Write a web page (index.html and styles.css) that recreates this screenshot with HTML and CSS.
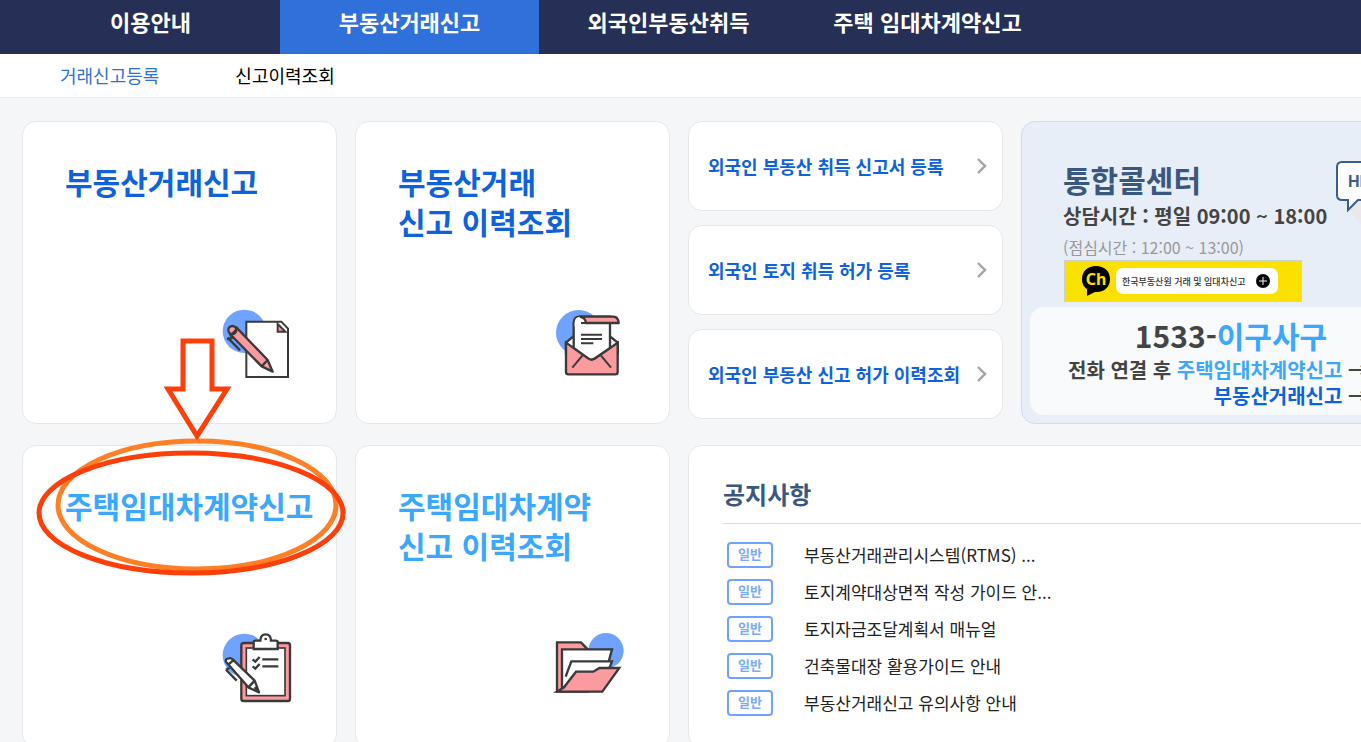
FILE: index.html
```
<!DOCTYPE html>
<html lang="ko">
<head>
    <meta charset="UTF-8">
    <meta name="viewport" content="width=device-width, initial-scale=1.0">
    <title>부동산거래관리시스템</title>
    <link rel="stylesheet" href="styles.css">
</head>
<body>
    <div class="page">
        <nav class="main-nav">
            <a href="#">이용안내</a>
            <a href="#" class="active">부동산거래신고</a>
            <a href="#">외국인부동산취득</a>
            <a href="#">주택 임대차계약신고</a>
        </nav>
        <nav class="sub-nav">
            <a href="#" class="active">거래신고등록</a>
            <a href="#">신고이력조회</a>
        </nav>

        <main class="grid">
            <a href="#" class="card menu-card">
                <h2>부동산거래신고</h2>
                <svg class="icon" viewBox="30 24 216 216">
                    <circle cx="103" cy="94" r="65" fill="#6fa3ff"/>
                    <path d="M109 65H214L234 86V231H109Z" fill="#fff" stroke="#3a3a3a" stroke-width="6"/>
                    <path d="M203 72V95H226Z" fill="#fb9a9f" stroke="#3a3a3a" stroke-width="6"/>
                    <path d="M77 81L173 180L188 215L155 199L58 101Z" fill="#fb9a9f"/>
                    <circle cx="67" cy="90" r="12" fill="#fb9a9f" stroke="#3a3a3a" stroke-width="7"/>
                    <path d="M79 82L173 180L188 215L155 199L60 102M62 107L78 90M155 199L173 180M55 115L88 149M54 117L70 113" fill="none" stroke="#3a3a3a" stroke-width="7" stroke-linecap="round" stroke-linejoin="round"/>
                </svg>
            </a>

            <a href="#" class="card menu-card">
                <h2>부동산거래<br>신고 이력조회</h2>
                <svg class="icon" viewBox="39 24 216 216">
                    <circle cx="116" cy="98" r="68" fill="#6fa3ff"/>
                    <path d="M78 128L100 109H210L233 128V160H78Z" fill="#fff" stroke="#3a3a3a" stroke-width="7"/>
                    <path d="M78 128L145 175Q155 182 165 175L233 128V216Q233 223 226 223H85Q78 223 78 216Z" fill="#fb9a9f" stroke="#3a3a3a" stroke-width="7"/>
                    <path d="M101 144V68Q102 50 119 50H210V144L165 175Q155 182 145 175Z" fill="#fff" stroke="#3a3a3a" stroke-width="7"/>
                    <path d="M119 50H220Q235 51 236 69H137Q137 53 119 50Z" fill="#fb9a9f" stroke="#3a3a3a" stroke-width="7" stroke-linejoin="round"/>
                    <path d="M119 50Q137 53 137 69Q120 66 104 80V68Q104 52 119 50Z" fill="#fff"/>
                    <path d="M119 50Q137 53 137 69H123" fill="none" stroke="#3a3a3a" stroke-width="6"/>
                    <path d="M123 104H186M123 117H186M123 130H160M127 167L97 203M183 167L213 203" stroke="#3a3a3a" stroke-width="6"/>
                </svg>
            </a>

            <div class="link-list">
                <a href="#" class="card link-card">외국인 부동산 취득 신고서 등록
                    <svg class="chevron" viewBox="0 0 10 16"><path d="M1 1L8 8L1 15"/></svg>
                </a>
                <a href="#" class="card link-card">외국인 토지 취득 허가 등록
                    <svg class="chevron" viewBox="0 0 10 16"><path d="M1 1L8 8L1 15"/></svg>
                </a>
                <a href="#" class="card link-card">외국인 부동산 신고 허가 이력조회
                    <svg class="chevron" viewBox="0 0 10 16"><path d="M1 1L8 8L1 15"/></svg>
                </a>
            </div>

            <section class="card call-card">
                <div class="call-top">
                    <div class="call-info">
                        <h2>통합콜센터</h2>
                        <p class="call-time">상담시간 : 평일 09:00 ~ 18:00</p>
                        <p class="call-lunch">(점심시간 : 12:00 ~ 13:00)</p>
                        <a href="#" class="kakao">
                            <svg class="kakao-logo" viewBox="0 0 30 32">
                                <path d="M15 1C7 1 1 6 1 14C1 19 3 22 6 24L6 31L14 27C23 28 29 22 29 14C29 6 23 1 15 1Z"/>
                                <text x="15" y="20" text-anchor="middle">Ch</text>
                            </svg>
                            <span class="kakao-label">한국부동산원 거래 및 임대차신고
                                <svg class="plus" viewBox="0 0 14 14"><circle cx="7" cy="7" r="7"/><path d="M7 3V11M3 7H11"/></svg>
                            </span>
                        </a>
                    </div>
                    <svg class="hello" viewBox="0 0 96 76">
                        <circle cx="52" cy="34" r="40" fill="#e9e9ea"/>
                        <path d="M6 1H76Q81 1 81 6V34Q81 39 76 39H22L12 49V39H6Q1 39 1 34V6Q1 1 6 1Z" fill="#fff" stroke="#3a5c92" stroke-width="2"/>
                        <text x="12" y="26">HELLO</text>
                    </svg>
                </div>
                <div class="call-number">
                    <p class="number">1533-<span class="sky">이구사구</span></p>
                    <p class="guide">전화 연결 후 <span class="sky">주택임대차계약신고</span> →<br><span class="blue">부동산거래신고</span> →</p>
                </div>
            </section>

            <a href="#" class="card menu-card sky">
                <h2>주택임대차계약신고</h2>
                <svg class="icon" viewBox="30 24 216 216">
                    <circle cx="103" cy="94" r="65" fill="#6fa3ff"/>
                    <rect x="94" y="57" width="146" height="174" rx="7" fill="#fb9a9f" stroke="#3a3a3a" stroke-width="7"/>
                    <rect x="109" y="72" width="116" height="143" fill="#fff" stroke="#3a3a3a" stroke-width="5"/>
                    <path d="M131 75V55Q131 50 136 50H151Q151 31 167 31Q183 31 183 50H197Q203 50 203 55V75Z" fill="#fff" stroke="#3a3a3a" stroke-width="7"/>
                    <circle cx="167" cy="45" r="4" fill="#3a3a3a"/>
                    <path d="M128 106L136 113L149 99M128 127L136 134L149 120M157 106H205M157 127H205" fill="none" stroke="#3a3a3a" stroke-width="7"/>
                    <path d="M48 113Q45 104 57 103Q64 101 71 109L134 170L147 205L115 190Z" fill="#fff" stroke="#3a3a3a" stroke-width="7" stroke-linejoin="round"/>
                    <path d="M55 122L73 106M115 190L134 170M134 190L147 205M48 137L80 170M48 137L59 131" fill="none" stroke="#3a3a3a" stroke-width="7"/>
                </svg>
            </a>

            <a href="#" class="card menu-card sky">
                <h2>주택임대차계약<br>신고 이력조회</h2>
                <svg class="icon" viewBox="39 24 216 216">
                    <circle cx="198" cy="80" r="53" fill="#6fa3ff"/>
                    <path d="M51 55H123L143 76V203H51Z" fill="#fb9a9f" stroke="#3a3a3a" stroke-width="7"/>
                    <path d="M66 76H216L196 150L100 190H66Z" fill="#fff" stroke="#3a3a3a" stroke-width="7"/>
                    <path d="M77 158L94 112H216L205 140" fill="#fff" stroke="#3a3a3a" stroke-width="7"/>
                    <path d="M51 203L72 190L108 143H160L178 132H238L187 203Z" fill="#fb9a9f" stroke="#3a3a3a" stroke-width="7"/>
                    <path d="M51 55V203M66 78V190H75" fill="none" stroke="#3a3a3a" stroke-width="6"/>
                </svg>
            </a>

            <section class="card notice">
                <h3>공지사항</h3>
                <ul>
                    <li><span class="badge">일반</span><a href="#">부동산거래관리시스템(RTMS) ...</a></li>
                    <li><span class="badge">일반</span><a href="#">토지계약대상면적 작성 가이드 안...</a></li>
                    <li><span class="badge">일반</span><a href="#">토지자금조달계획서 매뉴얼</a></li>
                    <li><span class="badge">일반</span><a href="#">건축물대장 활용가이드 안내</a></li>
                    <li><span class="badge">일반</span><a href="#">부동산거래신고 유의사항 안내</a></li>
                </ul>
            </section>
        </main>

        <!-- arrow and circles pointing at the lease report menu -->
        <svg class="marker" viewBox="0 0 320 250">
            <ellipse cx="167" cy="175" rx="139" ry="64" stroke="#ff7f27"/>
            <ellipse cx="161" cy="183" rx="152" ry="60" stroke="#ff3f0a"/>
            <path d="M153 11H182V59H197L167 106L138 59H153Z" stroke="#ff3f0a"/>
        </svg>
    </div>
</body>
</html>
```
FILE: styles.css
```
* {
    box-sizing: border-box;
}
body {
    margin: 0;
    background-color: #f5f6f8;
    font-family: "Noto Sans CJK KR", sans-serif;
    color: #222;
}
a {
    color: inherit;
    text-decoration: none;
}
h2, h3, p, ul {
    margin: 0;
    padding: 0;
}
.page {
    position: relative;
    height: 100vh;
    overflow: hidden;
}

/* navigation */
.main-nav {
    display: flex;
    height: 54px;
    padding-left: 21px;
    background: #262f55;
}
.main-nav a {
    flex: 0 0 259px;
    padding-bottom: 12px;
    line-height: 42px;
    text-align: center;
    font-size: 22px;
    font-weight: 700;
    color: #fff;
}
.main-nav a.active {
    background: #3070db;
}
.sub-nav {
    display: flex;
    gap: 76px;
    height: 44px;
    padding-left: 60px;
    background: #fff;
    border-bottom: 1px solid #e9ebee;
    font-size: 18px;
    line-height: 42px;
    color: #000;
}
.sub-nav a.active {
    color: #3070db;
}

/* cards */
.grid {
    display: grid;
    grid-template-columns: repeat(3, 315px) minmax(420px, 1fr);
    grid-auto-rows: minmax(303px, auto);
    gap: 21px 18px;
    padding: 23px 22px;
}
.card {
    background: #fff;
    border: 1px solid #e5e7ea;
    border-radius: 14px;
}
.menu-card {
    display: flex;
    flex-direction: column;
    justify-content: space-between;
    padding: 39px 0 43px 42px;
    color: #0e62dc;
}
.menu-card h2 {
    font-size: 30px;
    line-height: 40px;
    font-weight: 700;
}
.sky, .menu-card.sky {
    color: #3aa8ff;
}
.blue {
    color: #0e62dc;
}
.icon {
    width: 72px;
    height: 72px;
    margin-right: 44px;
    align-self: flex-end;
}
.link-list {
    display: flex;
    flex-direction: column;
    gap: 14px;
}
.link-card {
    display: flex;
    align-items: center;
    justify-content: space-between;
    height: 90px;
    padding: 0 15px 0 19px;
    font-size: 18px;
    font-weight: 700;
    white-space: nowrap;
    color: #0e62dc;
}
.chevron {
    flex: none;
    width: 10px;
    height: 16px;
    fill: none;
    stroke: #a3a3a3;
    stroke-width: 2.4;
}

/* call center */
.call-card {
    padding: 8px;
    background: #e8eef7;
    border-color: #cddcec;
}
.call-top {
    display: flex;
    gap: 5px;
    padding: 31px 0 5px 33px;
}
.call-info {
    flex: none;
    width: 268px;
    white-space: nowrap;
}
.call-info h2 {
    font-size: 30px;
    line-height: 36px;
    color: #39587f;
}
.call-time {
    font-size: 20px;
    line-height: 37px;
    font-weight: 700;
    color: #444;
}
.call-lunch {
    font-size: 16px;
    line-height: 26px;
    color: #999;
}
.kakao {
    display: flex;
    align-items: center;
    gap: 5px;
    width: 238px;
    height: 42px;
    margin-left: 1px;
    padding-left: 16px;
    background: #fae100;
    border: 1px solid #cfd0d2;
}
.kakao-logo {
    width: 30px;
    height: 32px;
}
.kakao-logo text {
    font: 700 16px "Noto Sans", sans-serif;
    fill: #fae100;
}
.kakao-label {
    display: flex;
    align-items: center;
    justify-content: space-between;
    width: 162px;
    height: 26px;
    padding: 0 8px 0 6px;
    background: #fff;
    border-radius: 7px;
    font-size: 9px;
    font-weight: 500;
    color: #333;
}
.plus {
    width: 14px;
    height: 14px;
}
.plus path {
    stroke: #fff;
}
.hello {
    flex: none;
    width: 96px;
    height: 76px;
}
.hello text {
    font: 700 16px "Liberation Sans", sans-serif;
    fill: #3a5c92;
}
.call-number {
    height: 108px;
    padding: 8px 0 0 38px;
    background: #f9fafc;
    border-radius: 14px;
    font-weight: 700;
    white-space: nowrap;
    color: #444;
}
.number {
    padding-right: 38px;
    text-align: center;
    font-size: 30px;
    line-height: 40px;
}
.guide {
    width: fit-content;
    padding-top: 2px;
    text-align: right;
    font-size: 20px;
    line-height: 26px;
}

/* notice */
.notice {
    grid-column: span 2;
    padding: 30px 34px 0;
}
.notice h3 {
    padding-bottom: 11px;
    border-bottom: 1px solid #d9dadc;
    font-size: 24px;
    line-height: 36px;
    color: #39587f;
}
.notice ul {
    padding: 12px 4px;
    list-style: none;
}
.notice li {
    display: flex;
    align-items: center;
    gap: 31px;
    height: 37px;
    font-size: 17px;
}
.badge {
    width: 46px;
    height: 26px;
    border: 2px solid #6fa3ff;
    border-radius: 4px;
    text-align: center;
    font-size: 13px;
    line-height: 20px;
    font-weight: 700;
    color: #7aaaff;
}

/* hand-drawn marker over the cards */
.marker {
    position: absolute;
    left: 30px;
    top: 330px;
    width: 320px;
    height: 250px;
    fill: none;
    stroke-width: 5;
    pointer-events: none;
}
```
